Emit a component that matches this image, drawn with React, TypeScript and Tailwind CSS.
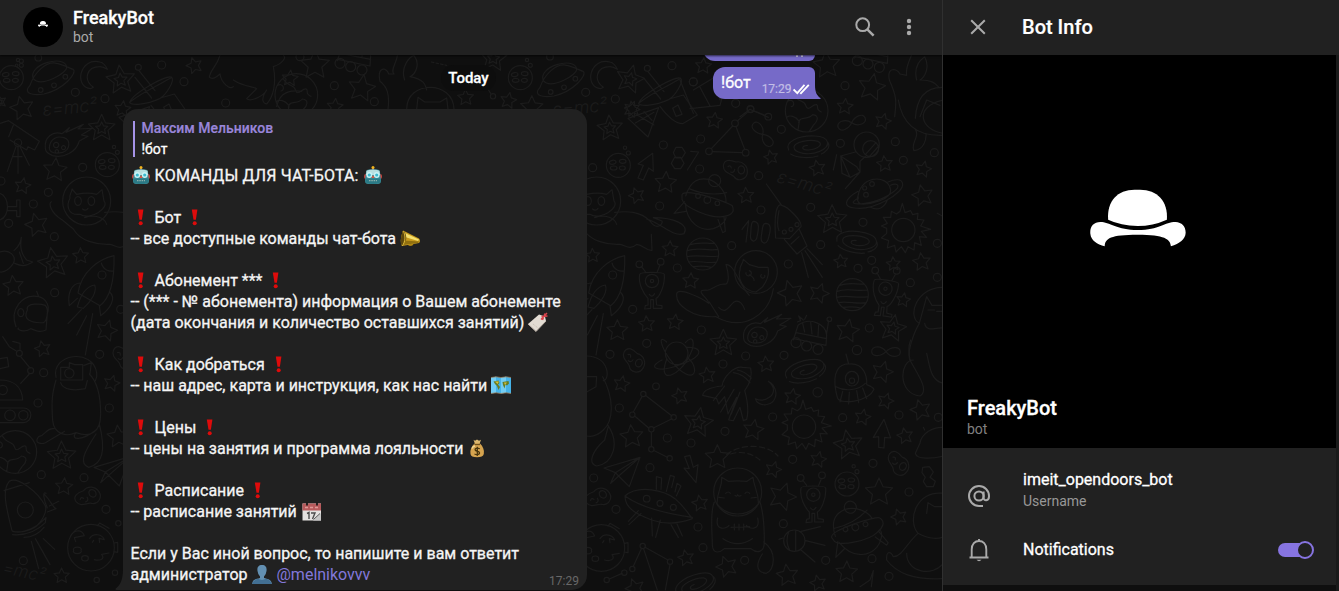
import type { ReactNode } from "react";

type Pt = [number, number, number?];
type Cluster = { ox: number; oy: number; stars: Pt[]; doubles: Pt[]; dots: Pt[] };

// Doodle positions are listed in thirds of a pixel, relative to each cluster's origin.
const clusters: Cluster[] = [
  {
    ox: 580, oy: 100,
    stars: [[157, 27, 24], [403, 62], [795, 20], [909, 64], [573, 172, 22], [712, 205], [914, 192], [1030, 208], [257, 248, 34], [170, 287], [498, 287], [1028, 287, 33], [270, 447], [38, 467, 22], [783, 484, 22], [940, 492, 22], [1025, 486, 28], [332, 543], [632, 580, 40], [717, 580, 31], [970, 600, 22], [112, 692, 33], [200, 672], [285, 667], [803, 693, 36]],
    doubles: [[90, 85, 40], [757, 360, 46], [430, 730, 42], [938, 685, 42]],
    dots: [[467, 10], [512, 28, 10], [565, 50, 10], [465, 70, 10], [387, 154, 10], [497, 158, 10], [362, 117], [250, 135], [604, 88], [781, 130], [946, 125], [1063, 158], [970, 181], [38, 203], [359, 207], [536, 227], [239, 318], [543, 330], [692, 322], [849, 367], [455, 437], [722, 434], [1072, 430], [292, 504], [625, 492], [875, 481], [834, 505], [991, 548], [1072, 532], [158, 628], [364, 690], [868, 684], [200, 730], [90, 763], [497, 768], [831, 750, 14], [612, 766]],
  },
  {
    ox: 580, oy: 340,
    stars: [[125, 132], [300, 168], [382, 106], [558, 73], [637, 170], [907, 96, 33], [917, 183], [1022, 210, 32], [848, 232], [520, 270, 32], [155, 290, 36], [975, 288], [412, 352, 38], [715, 359], [580, 389], [607, 470, 43], [897, 457, 43], [360, 490], [957, 531], [318, 654], [440, 680, 33], [622, 706, 34], [800, 697, 34], [714, 730], [165, 745, 30]],
    doubles: [[355, 248, 46], [805, 315, 46]],
    dots: [[228, 139, 10], [118, 204], [429, 72], [713, 157, 14], [578, 231], [262, 294], [333, 309], [435, 274], [788, 233], [957, 225], [1075, 232], [638, 358], [879, 370], [210, 383], [41, 414], [108, 508], [354, 561], [610, 551], [987, 456], [369, 623], [494, 661], [737, 661], [876, 656], [927, 709], [190, 162, 8], [157, 224, 8], [214, 268, 8], [281, 232, 8], [214, 328, 8], [269, 355, 8], [80, 720, 8], [133, 698, 8], [157, 687, 8], [188, 618, 8], [270, 665, 8]],
  },
  {
    ox: 0, oy: 180,
    stars: [[68, 18], [110, 135, 36], [242, 228], [40, 318, 32], [320, 452, 33], [128, 507], [335, 610], [192, 920, 27], [185, 1188, 24], [355, 770, 35]],
    doubles: [[160, 250, 48], [185, 828, 45]],
    dots: [[145, 37], [100, 72], [163, 170], [164, 338], [131, 578], [299, 523], [114, 669], [328, 684], [124, 884], [252, 893], [318, 988], [70, 1142], [290, 1200, 8], [345, 1178, 8], [355, 1030, 8], [26, 130], [362, 388]],
  },
  {
    ox: 0, oy: 0,
    stars: [[583, 197], [870, 235], [66, 325, 37], [368, 327], [165, 510, 37]],
    doubles: [[362, 240, 45], [305, 385, 42], [0, 305, 20]],
    dots: [[485, 195], [552, 245], [226, 277], [315, 296], [677, 309], [248, 502], [3, 543], [115, 173, 10], [64, 183, 6], [50, 196, 4]],
  },
  {
    ox: 260, oy: 50,
    stars: [[165, 45, 45], [305, 115, 42], [617, 143], [745, 152], [815, 172, 35], [1115, 178], [225, 170]],
    doubles: [[700, 25, 42], [1110, 88, 44]],
    dots: [[223, 107], [343, 155], [977, 127], [1066, 147], [1236, 47], [1300, 96], [699, 139, 8], [120, 20], [870, 20, 10]],
  },
  {
    ox: 680, oy: 0,
    stars: [[70, 198], [575, 262, 42], [440, 195, 42]],
    doubles: [],
    dots: [[40, 245], [495, 257]],
  },
];

function starPath(x: number, y: number, r: number) {
  const turn = ((x * 7 + y * 13) % 40) - 20;
  let d = "";
  for (let i = 0; i < 10; i++) {
    const a = ((i * 36 - 90 + turn) * Math.PI) / 180;
    const q = i % 2 ? r * 0.48 : r;
    d += `${i ? "L" : "M"}${(x + q * Math.cos(a)).toFixed(1)} ${(y + q * Math.sin(a)).toFixed(1)}`;
  }
  return d + "Z";
}

function At({ x, y, r = 0, s = 1, children }: { x: number; y: number; r?: number; s?: number; children: ReactNode }) {
  return <g transform={`translate(${x} ${y}) rotate(${r}) scale(${s})`}>{children}</g>;
}

const Galaxy = () => <path d="M-58 12C-70-12-30-32 20-30C65-28 72 0 35 16C5 30-42 22-42 4C-42-12 5-22 30-14C48-6 30 10 2 12C-22 12-20 0-2-2M-52 24C-30 38 10 36 30 30M60-10C70 5 50 20 40 24" />;
const Infinity = () => <path d="M0 0C-14-20-44-18-43 0C-42 18-14 14 0 0C14-14 42-18 43 0C44 18 14 20 0 0Z" />;
const Moonlet = () => (
  <><circle r="36" /><ellipse cx="-15" cy="-12" rx="10" ry="6" transform="rotate(-10)" /><ellipse cx="13" cy="-12" rx="10" ry="6" /><ellipse cx="-14" cy="8" rx="10" ry="6" /><ellipse cx="12" cy="8" rx="9" ry="6" /><circle cx="20" cy="-53" r="5" /><circle cx="30" cy="-37" r="6" /></>
);
const Bean = () => <path d="M-36-12C-34-34-14-30 2-24C22-28 38-12 36 8C34 30 6 36-4 20C-12 10-36 10-36-12ZM8-2A10 12 0 1 1 8 1M-22-10Q-14-16-12-6M-14 6Q-4 10-2-2" />;
const Banded = () => <path d="M-48 0A48 48 0 1 0 48 0A48 48 0 1 0-48 0ZM-38-28C-10-38 15-30 36-32M-46-10C-15-22 15-8 46-14M-47 8C-15 0 15 12 47 6M-42 24C-15 18 15 30 42 24M-28 38Q0 34 26 40" />;
const Alien = () => (
  <><path d="M-37-30C-36-38 36-38 37-30C40 5 20 40 12 42L14 62L30 64V72H4V46H-4V72L-22 74L-20 64L-12 62V42C-24 30-42 0-37-30ZM-20-38L-32-54M16-38L24-58M-8 30Q0 42 8 28" /><circle cy="-10" r="20" /><circle cy="-10" r="5" /><circle cx="-38" cy="-60" r="10" /><circle cx="26" cy="-68" r="10" /></>
);
const Sun = () => <path d="M-35 0A35 35 0 1 0 35 0A35 35 0 1 0-35 0ZM-50-5L-66-12L-48-20L-60-38L-38-38L-36-56L-20-48L-10-56L-3-80L5-52L22-58L28-46L44-50L42-32L62-30L52-12L82-2L54 4L70 22L48 20L54 46L34 38L32 60L14 50L6 68L-6 50L-22 66L-26 46L-48 54L-44 32L-66 24L-50 10Z" />;
const Saucer = () => (
  <><path d="M-62 32C-50-4-15-42 18-34C40-30 58-18 68 -16C80-5 40 44-20 58C-60 64-76 54-68 40ZM-52 12C-70-30 40-62 48-24C52-5-30 40-52 12Z" /><circle cx="-30" cy="46" r="7" /><circle cx="10" cy="32" r="7" /><circle cx="44" cy="6" r="7" /></>
);
const Ship = () => (
  <><path d="M-65-22C-50-70-25-78 5-72C35-62 58-30 56 -5M-76-26C-65-48 74 0 75 8C85 30 65 38 45 40C10 46-70 12-76-12ZM-66 0C-62 60-20 85 18 76C40 70 56 52 56 42M-68-5L-100 30L-64 24M32 48L46 88L54 84L50 40M-55-44Q0-20 58-32" /><circle cx="22" cy="-68" r="18" /><circle cx="-28" cy="-22" r="7" /><circle cx="0" cy="-10" r="10" /><circle cx="30" cy="0" r="7" /></>
);
const Ringed = () => (
  <><path d="M-50 20C-52-50 40-60 48-8C50 20-10 36-42 34C-60 24-50 10-48 4M-50-4C-92 20-96 44-60 46C0 54 88 0 84-26C82-44 58-40 40-32M-48 16C-80 32-60 36-30 32C20 26 72-8 70-20C68-28 56-26 48-22M-12 44C10 56 30 44 38 22" /><circle cx="-30" cy="-14" r="6" /><circle cx="-8" cy="-26" r="7" /><circle cx="-26" cy="6" r="7" /></>
);
const Rocket = () => (
  <><path d="M-10-56C-24-64-34-30-28 42L14 44L48 8C52-8 10-52-10-56ZM-10-56L-56-120M-2 46L36 90L66 66L42 14M18 60L42 38M50 86L70 160M60 80L112 160M66 74L112 122M-18-40C-22-20-24 8-18 20" /><circle cx="-2" cy="24" r="6" /><circle cx="18" cy="16" r="6" /><circle cx="36" cy="2" r="6" /></>
);
const Cruiser = () => (
  <><path d="M74-108C30-98-24-62-34 4L32 42C60 20 76-30 74-108ZM36-86C42-64 60-60 72-62M-28-26C-56-24-66 10-60 42L-36 20M60 0C82 18 64 50 34 72L30 42M-36 46C-26 8-8-16 16-20C24 0 6 28-18 50ZM-8 72L-38 130M10 66L-12 190M-24 54L-64 96" /><circle cx="38" cy="-50" r="12" /></>
);
const Antenna = () => (
  <><path d="M-66 36C-60 10 46-50 60-40C70-30 44 12 24 24C-20 44-60 44-66 36ZM-66 36C-40 10 30-20 60-40M-50-40L0 22M-38-60L10 0M26 22L68 10L110 70L66 96C40 96 10 60-2 44M36 50L52 40L64 68L46 74ZM-98 80L-6 48L-38 136ZM-70 70L-20 100M-50 60L-26 86M-76 94L-20 62" /><circle cx="-40" cy="-70" r="9" /></>
);
const Comet = () => <path d="M-62 20C-66-12-40-34-12-24L10-42L0-28L52-52L36-38L80-40L46-20L66-16L40-2C30 34-10 50-40 42C-56 36-62 30-62 20ZM-50 18C-48-10-26-18-6-12C16-4 12 24-10 32C-34 38-50 32-50 18ZM-30 2A8 8 0 1 0-29 2M-8 12A6 6 0 1 0-7 12M-28 24A5 5 0 1 0-27 24" />;
const Rover = () => (
  <><path d="M-48 20L-34-24C0-50 50-30 52 6L50 36L-46 16ZM-40-2L52 16M-20-30L-14-4M4-34L8 2M28-26L26 8M52 0L58-38M-18-40L-32-52L-26-38L-36-34M-14-42L-8-54" /><circle cx="60" cy="-42" r="7" /><circle cx="-40" cy="28" r="15" /><circle cx="-8" cy="38" r="15" /><circle cx="26" cy="48" r="15" /></>
);
const Earth = () => <path d="M-64 0A64 64 0 1 0 64 0A64 64 0 1 0-64 0ZM-58-28C-40-40-32-14-46-12M-40-50C-24-20-8-36-2-14C4 6 18-22 30-18C38-12 24-4 44 4M-24 36C-20 14 4 30 18 12C40 14 32 34 20 44L8 62M-60 20C-50 12-34 16-22 32L-26 58" />;
const Arrow = () => <path d="M20-40L22 14L8 4L-8 40L-24 34L-8-4L-24-8Z" />;
const Atom = () => <path d="M-34 0A34 34 0 1 0 34 0A34 34 0 1 0-34 0ZM-44 20C-94 44-54 60 16 32C88 4 74-20 30-18M-30-34C-60-60-44-14-20 18C8 56 52 84 54 50C52 30 44 22 34 14M26-32C50-60 56-30 42 0C26 40-10 70-30 66C-44 58-36 34-30 18" />;
const LongCat = () => (
  <><circle r="72" /><path d="M-62 36C-60-14-46-10-48-44L-28-32C-10-34 10-34 28-32L46-44C48-14 64 0 62 36C30 76-30 76-62 36ZM-70 30C-84 60-76 120-76 160C-74 190-50 180-40 170H40C60 186 80 180 80 150C80 100 78 60 66 28M78 150C120 180 110 232 86 244C50 240 58 210 74 186M-60 78C-70 120-30 110-26 100M60 78C70 120 30 110 26 100M-20 106L36 104M-10 96V114M4 96V114M18 96V114M-36 4Q-28-4-22 4M22 4Q28-4 36 4M-8 10Q-2 16 0 8Q4 16 10 10M-56 16L-40 18M56 16L40 18M-44 140Q0 170 44 140" /></>
);
const FloatCat = () => (
  <><circle r="64" /><path d="M-48-6C-48-24-40-22-38-38L-20-22L8-14L36-14C42 10 30 30 20 44L0 60C-40 56-56 20-48-6ZM-20 8Q-4 18-6 26M-30 2A8 8 0 1 0-20-4M16 8A6 6 0 1 0 26 10M-90-22C-66-26-50 40-20 70M-90-22C-80 10-80 40-96 36C-120 36-140 60-150 54C-188 54-140 80-142 94M-142 94C-160 80-240 40-238 68C-240 100-190 138-120 134C-40 180 40 130 52 50M-112 134L-140 90M-112 106C-90 130-80 100-66 90C-50 80-38 100-34 112" /></>
);
const FlyCat = () => (
  <><circle cx="0" r="72" /><path d="M-50-8C-54-20-44-24-44-36L-30-20C-10-24 14-24 30-20L46-34L52 0C70 20 10 60-20 40C-60 44-60 10-50-8ZM-36 0A10 13 0 1 0-16 0A10 13 0 1 0-36 0M4 0A10 13 0 1 0 24 0A10 13 0 1 0 4 0M-12 24Q-4 32 4 22M54 34C90 30 130 30 160 60C180 90 200 70 196 60L170 50C230 50 280 70 262 98C230 110 200 70 150 54M164 100L166 148C150 150 140 132 120 130C100 150 80 130 70 130C30 132-20 120-40 84L-74 56C-110 34-114 6-106 2M-6 50C10 44 50 40 60 70" /></>
);
const Helmet = () => <path d="M-48 40C-68-10-30-60 20-50C44-44 54-20 46 0L42 50C20 60 10 50-4 46C-20 60-50 48-40 44M-14-10C-20-34 30-28 40-24C52-10 44 24 34 28C0 30-30 20-14-10ZM20-50L14-66M-34-14A9 12 0 1 0-33-14" />;
const PhotoCat = () => <path d="M-60 10C-76-60 50-80 62-4C64 10 60 16 58 20M-46-20H-20V-34L-4-28H20V18H-46ZM-34-2A14 14 0 1 0-6-2A14 14 0 1 0-34-2M24-26L46-34L42 0M-60 18C-72 60-74 80-70 140C-66 180-30 190 0 176C40 190 74 180 74 120C74 60 60 20 40 0M-66 164C-90 160-90 184-112 188C-130 210-100 210-92 206L-34 172M0 176C-20 200 20 200 60 168M70 150C90 230 80 270 38 280C10 270 20 240 60 180M-46 26C-40 50 0 50 28 44L34 20" />;
const Pod = () => <path d="M-44-88C-22-104 40-60 64 -14C72 10 44 40 38 46C20 60-20 70-36 60C-48 10-70-60-44-88ZM-20-2A24 24 0 1 0 28-2A24 24 0 1 0-20-2M-60-60L16-84M-34 62C0 70 40 50 66 20L64 36C30 70-10 74-34 72M0 80C20 80 44 70 60 50M22 92L44 174M34 84L78 162M58 84L92 116M76-14L104-28M62-48C80-30 86-10 96-6L70 4M66-52C54-60 60-30 70-8" />;
const Plane = () => <path d="M-108 32L0 0L-32 88L-64 56L-88 78L-74 46L-108 32M0 0L-74 46L-64 56M0 0L-64 56" />;
const Beetle = () => (
  <><path d="M-100-24C-60-60 20-40 50-16C80 10 90 30 102 44C60 60 20 62-20 48C-60 32-100 16-100-24ZM-100-24C-40 20 60 34 102 40M-60 20L-90 52M-52 28L-88 62M-20 42L-18 96M6 48L-8 100M38 62L60 100M56 60L72 96M-6-44V-82L10-78L8-44M24-38L36-86L48-82L40-50M50-36L56-62L68-54L54-24" /><circle cx="-35" cy="-16" r="10" /><circle cx="5" cy="-2" r="9" /><circle cx="45" cy="10" r="9" /></>
);
const Shuttle = () => <path d="M38-80C10-84-20-50-24-24C-60-20-80-10-82 4L-40 14L-34 30L-16 8L-6 60L20 10L-4 78L10 80L30 40L40 80L50 76C60 40 44-10 44-10C66-40 66-60 62-78ZM10-64Q40-60 60-34M22-72Q44-68 64-48M-16-24L-50 20M12-14L-28 54M30-6L4 60" />;
const DomeAlien = () => <path d="M-48 30C-60-30-40-56-6-54C34-56 46-20 44 8C54 12 64 16 66 22C50 60-40 70-44 46ZM-48 14C-20 30 20 24 40 4M-10-54L-18-84M-20-10A20 22 0 1 0 20-10A20 22 0 1 0-20-10M-8-4A8 8 0 1 0 8-4A8 8 0 1 0-8-4M-28 28L-36 60M-8 30L-10 66M14 26L20 62M32 18L44 50" />;
const Satellite = () => <path d="M-32 0A32 32 0 1 0 32 0A32 32 0 1 0-32 0ZM-16-28C-24-10-24 10-14 28M4-32V32M20-28L78-42M34 0L92 14M20 28L62 64M-46-4L-34-8" />;
const Face = () => <path d="M-70 0A70 70 0 1 0 70 0A70 70 0 1 0-70 0ZM-62-34C-54-50-30-60-20-36L-50-30L-46-18M-4-28C8-46 34-40 40-24L24-28L26-16M8-22L4-16M-52 8A12 7 0 1 0-30 8A12 7 0 1 0-52 8M-28 32A10 8 0 1 0-8 32A10 8 0 1 0-28 32M10 36C24 40 44 36 32 20L54 16M70-14L80-16V14L68 12M20-66L26-74L54-58" />;
const Probe = () => <path d="M-38 0A38 38 0 1 0 38 0A38 38 0 1 0-38 0ZM-12 12A24 24 0 1 0 36 12A24 24 0 1 0-12 12M-4 30L28-6M10 34L36 4M-34 22L-78 34L-74 86L-48 98L-20 82L-20 50L-4 36M-78 34L-30 66L-20 82M-78 34L-50 98M-20 82L-64 132M-90 30L-100 76" />;

function Doodles() {
  return (
    <svg className="absolute inset-0 h-full w-full" viewBox="0 0 942 591" preserveAspectRatio="xMinYMin slice" fill="none" stroke="#1c1c1c" aria-hidden="true">
      {clusters.map((c) => (
        <g key={`${c.ox}-${c.oy}`} transform={`translate(${c.ox} ${c.oy}) scale(.33333)`} strokeWidth="3.6" strokeLinejoin="round">
          {c.stars.map(([x, y, r = 25]) => <path key={`s${x}-${y}`} d={starPath(x, y, r)} />)}
          {c.doubles.map(([x, y, r = 42]) => <path key={`d${x}-${y}`} d={starPath(x, y, r) + starPath(x, y, r * 0.46)} />)}
          {c.dots.map(([x, y, r = 12]) => <circle key={`c${x}-${y}`} cx={x} cy={y} r={r} />)}
        </g>
      ))}
      <g transform="translate(580 100) scale(.33333)" strokeWidth="3.6" strokeLinejoin="round" strokeLinecap="round">
        <path d="M520 32L556 46M505 35L472 63M458 78L394 146M397 155L487 158M468 80L494 148" />
        <At x={548} y={103} r={50}><Infinity /></At>
        <At x={815} y={68} r={-20}><Infinity /></At>
        <At x={918} y={755}><Infinity /></At>
        <At x={680} y={32}><Earth /></At>
        <At x={684} y={138}><Galaxy /></At>
        <At x={830} y={424} r={12}><Galaxy /></At>
        <At x={115} y={196}><Moonlet /></At>
        <At x={198} y={200}><Arrow /></At>
        <path d="M288 142L306 142L316 158L306 174H288L280 158ZM284 172H302L312 190L302 206H284L274 190ZM332 154L356 156L322 210" />
        <At x={466} y={210}><Bean /></At>
        <At x={382} y={310}><Ship /></At>
        <At x={860} y={134}><Probe /></At>
        <At x={884} y={278}><Ringed /></At>
        <At x={970} y={390}><Sun /></At>
        <At x={615} y={372}><Rocket /></At>
        <path d="M486 388L506 362L498 426M520 364C540 364 536 386 532 406C528 434 508 424 512 402C514 380 512 366 520 364ZM556 370C576 370 572 392 566 412C560 440 540 430 544 408C548 386 546 372 556 370Z" />
        <At x={368} y={462}><Banded /></At>
        <At x={817} y={584}><Banded /></At>
        <At x={216} y={553}><Alien /></At>
        <At x={915} y={576} r={8}><Alien /></At>
        <At x={528} y={516}><FloatCat /></At>
        <At x={553} y={695}><Comet /></At>
        <At x={688} y={700}><Rover /></At>
        <At x={50} y={303}><FlyCat /></At>
        <At x={60} y={575}><Cruiser /></At>
        <At x={290} y={760}><Atom /></At>
        <path d="M955 0C965 60 1000 110 1090 106M1090 0C1000 20 1020 90 1090 100M1005 86C1022 110 990 130 1002 152C1030 150 1040 120 1038 100M1090 562C1010 560 980 650 1018 670C1000 700 980 760 990 780M1018 670L1040 590L1056 616H1090M1044 630H1064M1070 634H1088M1034 670C1040 700 1070 680 1090 684M1072 340L1090 350" />
      </g>
      <g transform="translate(580 340) scale(.33333)" strokeWidth="3.6" strokeLinejoin="round" strokeLinecap="round">
        <path d="M186 170L160 216M164 228L206 264M220 264L276 236M196 166L276 228M214 277V319M220 331L262 352M88 717L126 700M160 679L184 626M195 622L264 660M270 674L256 750M191 627L232 750" />
        <At x={160} y={62} r={25}><Bean /></At>
        <At x={953} y={371} r={30}><Bean /></At>
        <At x={55} y={475} r={-40}><Bean /></At>
        <At x={450} y={162}><Shuttle /></At>
        <path d="M565 124C585 140 585 160 568 172C552 184 538 182 526 176C530 200 586 206 588 160C586 142 578 130 565 124Z" />
        <At x={675} y={92} r={-10}><Galaxy /></At>
        <At x={345} y={735} r={-15}><Galaxy /></At>
        <At x={816} y={126}><DomeAlien /></At>
        <At x={672} y={260}><Sun /></At>
        <path d="M912 238L932 294L914 292L912 324L896 322V290L880 292ZM330 346L314 350L328 386L312 384L348 428L354 374L340 382Z" />
        <path d="M440 344C480 310 560 310 594 348M452 342C490 330 520 344 540 360" strokeDasharray="16 10" />
        <At x={473} y={456}><LongCat /></At>
        <At x={180} y={352}><Plane /></At>
        <At x={235} y={492}><Beetle /></At>
        <At x={700} y={474}><Alien /></At>
        <At x={801} y={432}><Moonlet /></At>
        <At x={832} y={570} r={-35}><Ship /></At>
        <At x={643} y={602}><Satellite /></At>
        <At x={64} y={624}><Face /></At>
        <path d="M20 48C90 50 90 120 70 122M20 110H50L48 140L20 156M68 110C100 170 104 240 70 270C50 290 30 290 20 288M84 256C120 310 100 370 50 378C20 370 40 330 74 300L84 262M1000 60C960 60 950 160 1020 168C1050 150 1010 100 990 60C986 40 984 20 992 0M1090 130C1050 120 1050 80 1040 40M1028 382L1048 380L1060 396L1050 412L1066 424L1060 440H1040L1030 424L1036 412L1026 398ZM1090 460C1010 450 980 540 1014 580C1050 600 1080 596 1090 590M1014 580C980 610 966 650 940 650C930 630 918 636 920 660C950 700 1000 720 1090 716M980 640C980 700 1060 710 1090 670M1040 520L1044 488L1064 500L1090 500M840 740L870 720L880 692L874 740M1006 340L1020 310C1024 280 1060 260 1090 262M1006 340C1010 360 1060 356 1090 348M1034 270L1030 262" />
      </g>
      <g transform="translate(0 180) scale(.33333)" strokeWidth="3.6" strokeLinejoin="round" strokeLinecap="round">
        <At x={260} y={63}><FlyCat /></At>
        <At x={268} y={335}><Cruiser /></At>
        <At x={96} y={400}><Helmet /></At>
        <At x={228} y={582}><PhotoCat /></At>
        <At x={46} y={816}><Earth /></At>
        <At x={72} y={992}><Pod /></At>
        <At x={390} y={830}><Plane /></At>
        <At x={264} y={952} r={-40}><Bean /></At>
        <At x={273} y={1103}><Face /></At>
        <At x={370} y={535} r={20}><Bean /></At>
        <path d="M0 40C30 50 30 110 0 120M24 80H50V60H60V110H50V92H24M0 216C30 206 50 230 40 250C20 280 0 276 0 276M42 212C56 200 62 190 64 172C60 200 62 220 80 240L98 246C80 256 70 262 44 250M58 216L70 250M8 470L28 500L50 514M38 484L60 490V510M62 530L90 564M88 582L62 610M0 600C40 600 66 620 68 660H0M0 684H70C100 684 100 726 70 728H0M0 536L22 532L26 560L0 566" />
        <circle cx="58" cy="520" r="9" /><circle cx="92" cy="572" r="9" /><circle cx="30" cy="706" r="16" /><circle cx="70" cy="706" r="14" /><circle cx="8" cy="630" r="14" />
      </g>
      <g transform="scale(.33333)" strokeWidth="3.6" strokeLinejoin="round" strokeLinecap="round">
        <At x={34} y={233}><Moonlet /></At>
        <At x={322} y={494}><Moonlet /></At>
        <At x={152} y={224}><Saucer /></At>
        <At x={455} y={272}><Antenna /></At>
        <At x={198} y={425}><Comet /></At>
        <path d="M300 186C240 170 220 260 272 266L280 262C250 240 258 200 300 200C310 200 316 204 322 208C316 194 310 188 300 186ZM0 370L26 362L118 424L104 450L84 440L80 450L30 420M40 376L26 410M54 440V520M48 440L22 514M60 440L88 496M40 470H66M660 166C650 200 630 210 628 232C640 240 650 230 660 222C664 250 690 270 700 260M700 240C730 260 760 260 770 266L740 296C750 306 790 290 800 270C780 300 790 310 800 312C820 290 830 250 820 200C850 190 860 170 850 166M830 320C840 270 880 270 905 274" />
        <circle cx="54" cy="428" r="11" />
      </g>
      <g transform="translate(260 50) scale(.33333)" strokeWidth="3.6" strokeLinejoin="round" strokeLinecap="round">
        <At x={781} y={83}><Moonlet /></At>
        <At x={902} y={80}><Saucer /></At>
        <At x={1202} y={125}><Antenna /></At>
        <At x={280} y={12}><Rover /></At>
        <At x={109} y={135}><Earth /></At>
        <path d="M1050 36C990 20 970 110 1022 116L1030 112C1000 90 1008 50 1050 50C1060 50 1066 54 1072 58C1066 44 1060 38 1050 36ZM440 178C440 90 580 90 582 178M470 178L474 142L494 156H540L560 144L564 178M384 178C390 130 380 110 360 94C350 50 380 50 386 72H402C390 60 410 40 412 16M434 90C420 50 450 20 462 16C480 40 470 70 450 80C500 90 496 110 500 120M660 80L692 130" />
        <path d="M514 36L560 46" strokeDasharray="8 6" />
      </g>
      <g transform="translate(680 0) scale(.33333)" strokeWidth="3.6" strokeLinejoin="round" strokeLinecap="round">
        <At x={572} y={154}><Rover /></At>
        <path d="M644 350C650 300 650 290 628 240C620 200 650 204 660 222L680 226C676 200 690 180 694 166M710 240C700 200 720 180 734 170C750 200 736 230 720 240C770 240 770 260 780 264M706 355C710 290 740 262 786 262M720 350L740 300L780 316M0 240L40 340M40 270L150 204L120 316L30 326M60 262L90 318M100 240L120 300M180 350L210 328L265 352" />
        <circle cx="211" cy="327" r="10" />
      </g>
      <g fill="#1c1c1c" stroke="none" fontFamily="Inter, 'Open Sans', sans-serif" fontWeight="300" fontStyle="italic">
        <text x="43" y="116" fontSize="18" transform="rotate(-5 43 116)">ε=mc²</text>
        <text x="553" y="116" fontSize="18" transform="rotate(-5 553 116)">ε=mc²</text>
        <text x="776" y="182" fontSize="18" transform="rotate(16 776 182)">ε=mc²</text>
        <text x="2" y="573" fontSize="17" transform="rotate(12 2 573)">=mc²</text>
      </g>
    </svg>
  );
}

function Emoji({ children, className = "" }: { children: ReactNode; className?: string }) {
  return <svg viewBox="0 0 20 20" className={`h-5 w-5 shrink-0 ${className}`} aria-hidden="true">{children}</svg>;
}
const Robot = () => (
  <Emoji>
    <path d="M10 2V5" stroke="#7a5a9a" strokeWidth="1.6" /><circle cx="10" cy="1.6" r="1.5" fill="#f2b51d" />
    <rect x="1" y="8" width="18" height="5" rx="2" fill="#c8413b" />
    <path d="M3 6Q3 3.500 6 3.500H14Q17 3.500 17 6L18 14.500Q18 18 14.500 18H5.500Q2 18 2 14.500Z" fill="#3b8f9a" />
    <path d="M3.500 4.700Q10 2.500 16.500 4.700L17 9H3Z" fill="#b7dfe0" />
    <path d="M2.500 12.500H17.500V16.500Q10 19.500 2.500 16.500Z" fill="#2b7a86" />
    <circle cx="6.300" cy="9" r="2.900" fill="#c9f3f5" /><circle cx="13.700" cy="9" r="2.900" fill="#c9f3f5" />
    <circle cx="6.300" cy="9" r="1.600" fill="#3dbad0" /><circle cx="13.700" cy="9" r="1.600" fill="#3dbad0" />
    <path d="M10 9L11.500 12H8.500Z" fill="#e2543f" /><path d="M6 14.700H14" stroke="#8fb0ac" strokeWidth="1.200" strokeDasharray="1.500 .8" />
  </Emoji>
);
const Bang = () => <Emoji><path d="M6.800 1.500H12.400L10.900 11.700H8.500Z" fill="#de0b0b" /><circle cx="9.700" cy="15.200" r="2" fill="#de0b0b" /></Emoji>;
const Horn = () => (
  <Emoji>
    <path d="M7 13Q9 18 13 15" fill="none" stroke="#a9810f" strokeWidth="1.600" />
    <path d="M3 1.500L19 9.500Q21 12 19 14L2 17Q-1 12 3 1.500Z" fill="#c79a1c" /><path d="M5 4L19 10.500L18 12L5 8Z" fill="#f4df6e" />
    <path d="M3 1.500C7 4 8 13 2 17Q-1 12 3 1.500Z" fill="#5d470c" /><path d="M4 11.500L19 12.500L18 14L3 16Z" fill="#91700f" /><path d="M3 2C5.500 5 6 13 2 17" fill="none" stroke="#e7c23e" strokeWidth=".9" />
  </Emoji>
);
const Tag = () => (
  <Emoji className="overflow-visible">
    <path d="M11 1.500L17 3.500L18 8L8 18.500L0 11Z" fill="#e3dcd3" /><path d="M0 11L8 18.500L18 8" fill="none" stroke="#b5aaa0" />
    <path d="M13 6.500L19 0M13.500 3.500L19.500 3M14.500 7L17 .5" stroke="#d9434b" strokeWidth="1.500" /><path d="M5 11L10 15" stroke="#c8beb4" strokeDasharray="1 1" />
  </Emoji>
);
const WorldMap = () => (
  <Emoji>
    <path d="M0 1.500L5 .8L10 1.500L15 .8L20 1.500V17.500L15 16.800L10 17.500L5 16.800L0 17.500Z" fill="#46b3e8" /><path d="M0 1.500L5 .8V16.800L0 17.500ZM10 1.500L15 .8V16.800L10 17.500Z" fill="#72cdf4" />
    <path d="M2.500 5.500L7.500 4.500L8.500 7L7 8.500L9 11L7.500 14L6 10L4 8ZM11.500 6L17.500 5L18 7.500L16 9.500L14.500 8.500L13.500 12.500L12 9Z" fill="#667c24" /><path d="M4 5.500H8L6.500 8ZM13 6.500H16L14 9Z" fill="#d2bf3c" />
    <path d="M0 1.500L5 .8L10 1.500L15 .8L20 1.500M0 17.500L5 16.800L10 17.500L15 16.800L20 17.500" stroke="#9a7b58" fill="none" strokeWidth=".8" />
  </Emoji>
);
const MoneyBag = () => (
  <Emoji>
    <path d="M6.500 .8L8 1.800L10 .6L12 1.800L14 .8L12.500 5H8Z" fill="#dcb76d" /><path d="M7.500 4.500H13C16 7.500 17.500 11 16.800 15Q16 18.300 10 18.300Q4 18.300 3.500 15C2.800 11 4.500 7.500 7.500 4.500Z" fill="#d6a44f" />
    <path d="M7.500 5.500H13" stroke="#71521d" strokeWidth="1.300" /><path d="M5 9.500Q6 7 8 7" stroke="#f2d796" strokeWidth="1.500" fill="none" />
    <path d="M12.800 9.800Q10 8.300 8.200 10Q7.800 11.900 10.300 12.300Q13 12.700 12.400 14.700Q10.500 16.300 7.500 15M10.300 7.700V17" stroke="#49350d" strokeWidth="1.300" fill="none" />
  </Emoji>
);
const Calendar = () => (
  <Emoji className="translate-x-[1px]">
    <rect x=".5" y="1.500" width="18.500" height="17" fill="#e4e2e0" /><rect x=".5" y="1.500" width="18.500" height="7" fill="#b75a5c" />
    <path d="M3 5.500H6M8 5.500H11M13 5.500H16" stroke="#df9a98" strokeWidth="1.500" /><path d="M5 0V3.500M15 0V3.500" stroke="#1a1a1a" strokeWidth="1.800" />
    <path d="M5 11.500L7 10.500V17M9 11H13L10.500 17" stroke="#4c4c4c" strokeWidth="1.400" fill="none" /><path d="M19 11L11 18.500H19Z" fill="#c7c7c7" /><path d="M18 11.500L11.500 17.500" stroke="#555" />
  </Emoji>
);
const Person = () => (
  <Emoji><path d="M10 0C14 0 15 3 14.500 6Q14 10 12 11.500V13C15 14 19.500 14 19.800 19H.2C.5 14 5 14 8 13V11.500Q6 10 5.500 6C5 3 6 0 10 0Z" fill="#6390b2" /><path d="M6 13.800Q10 16 14 13.800Q19 15 19.800 19H.2Q1 15 6 13.800Z" fill="#426f93" /></Emoji>
);

const Line = ({ children }: { children?: ReactNode }) => <div className="flex h-[21px] items-center whitespace-pre">{children}</div>;

const Hat = ({ className }: { className: string }) => (
  <svg viewBox="63 56 286 174" preserveAspectRatio="none" className={className} fill="#fff" aria-hidden="true">
    <path d="M117 148C113 92 145 58 196 58H212C263 58 296 92 292 148Q250 167 205 167Q155 166 117 148Z" />
    <path d="M94 155C73 155 62 170 64 190C66 210 84 222 107 228C108 204 124 193 205 193C286 193 302 206 304 228C330 219 347 207 348 187C348 168 336 156 318 155C285 155 270 179 205 179C145 179 120 155 94 155Z" />
  </svg>
);

export default function App() {
  return (
    <div className="flex h-[591px] w-[1339px] overflow-hidden bg-[#0f0f0f] font-[Roboto,sans-serif] text-white">
      <main className="relative flex w-[942px] shrink-0 flex-col overflow-hidden">
        <Doodles />
        <header className="relative z-10 flex h-[55px] shrink-0 items-center bg-[#212121] pr-[21px] pb-px pl-[23px] shadow-[0_1px_2px_#000a]">
          <div className="flex h-10 w-10 items-center justify-center rounded-full bg-black pb-[7px]">
            <Hat className="h-[6px] w-[10px]" />
          </div>
          <div className="ml-[10px] flex-1">
            <h1 className="h-[20px] text-[18px] leading-[20px] font-medium [-webkit-text-stroke:0.3px]">FreakyBot</h1>
            <p className="h-[18px] text-[14px] leading-[18px] text-[#aaaaaa]">bot</p>
          </div>
          <svg viewBox="0 0 24 24" className="mr-[20px] h-6 w-6" fill="none" stroke="#aaa" strokeWidth="2" aria-label="Search"><circle cx="9.700" cy="9.700" r="6.400" /><path d="M14.300 14.300L20.600 20.600" strokeWidth="2.500" /></svg>
          <svg viewBox="0 0 24 24" className="h-6 w-6" fill="#aaa" aria-label="More"><circle cx="12" cy="6" r="2.200" /><circle cx="12" cy="12" r="2.200" /><circle cx="12" cy="18" r="2.200" /></svg>
        </header>

        <div className="relative flex-1">
          <div className="absolute top-[10px] left-[441px] flex h-[26px] w-[55px] items-center justify-center rounded-full bg-[#0d0d0d] text-[15px] font-medium [-webkit-text-stroke:0.3px]">Today</div>
          <div className="absolute top-[-20px] left-[703px] h-[26px] w-[112px] rounded-[12px] rounded-br-[6px] bg-[#766ac8]">
            <span className="absolute right-[12px] bottom-[4px] h-[2px] w-[2px] bg-white/60" />
            <span className="absolute right-[17px] bottom-[4px] h-[2px] w-[2px] bg-white/60" />
          </div>
          <div className="absolute top-[12px] left-[713px] flex h-8 w-[102px] items-center rounded-[12px] rounded-tr-[6px] rounded-br-none bg-[#766ac8] pl-2">
            <span className="-mt-px text-[16px] leading-[21px] [-webkit-text-stroke:0.3px]">!бот</span>
            <span className="mt-[11px] ml-[11px] text-[12px] leading-4 text-white/50 [-webkit-text-stroke:0.2px]">17:29</span>
            <svg viewBox="0 0 17 11" className="mt-[12px] ml-px h-[11px] w-[17px]" fill="none" stroke="#fff" strokeWidth="1.800" aria-label="Read"><path d="M.6 5.500L4.300 9.200L11.500 .8M7.300 8.500L8 9.200L15.800 .8" /></svg>
            <svg viewBox="0 0 7 14" className="absolute bottom-0 left-[101px] h-[14px] w-[7px]" fill="#766ac8" aria-hidden="true"><path d="M0 0H1C1 7 3 11 6.500 13Q7 14 6 14H0Z" /></svg>
          </div>
        </div>

        <article className="relative ml-[123px] flex h-[481px] w-[464px] shrink-0 flex-col rounded-[15px] rounded-bl-none bg-[#212121] px-[7.5px] pt-[12px]">
          <svg viewBox="0 0 9 20" className="absolute bottom-0 left-[-8px] h-5 w-[9px]" fill="#212121" aria-hidden="true"><path d="M9 0H8C8 9 5 16 .7 18.500Q0 20 1.500 20H9Z" /></svg>
          <div className="ml-[2.5px] h-9 border-l-2 border-[#a694e8] pl-[6.500px]">
            <div className="h-[18px] text-[14px] leading-[15px] font-medium text-[#9a86da] [-webkit-text-stroke:0.2px]">Максим Мельников</div>
            <div className="h-[18px] text-[14px] leading-[20px] [-webkit-text-stroke:0.3px]">!бот</div>
          </div>
          <div className="mt-[8px] text-[16px] leading-[21px] text-[#f5f5f5] [-webkit-text-stroke:0.3px]">
            <Line><Robot /><span className="tracking-[0.12px]"> КОМАНДЫ ДЛЯ ЧАТ-БОТА: </span><Robot /></Line>
            <Line />
            <Line><Bang /> Бот <Bang /></Line>
            <Line>-- все доступные команды чат-бота <Horn /></Line>
            <Line />
            <Line><Bang /> Абонемент *** <Bang /></Line>
            <Line>-- (*** - № абонемента) информация о Вашем абонементе</Line>
            <Line>(дата окончания и количество оставшихся занятий) <Tag /></Line>
            <Line />
            <Line><Bang /> Как добраться <Bang /></Line>
            <Line>-- наш адрес, карта и инструкция, как нас найти <WorldMap /></Line>
            <Line />
            <Line><Bang /> Цены <Bang /></Line>
            <Line>-- цены на занятия и программа лояльности <MoneyBag /></Line>
            <Line />
            <Line><Bang /> Расписание <Bang /></Line>
            <Line>-- расписание занятий <Calendar /></Line>
            <Line />
            <Line>Если у Вас иной вопрос, то напишите и вам ответит</Line>
            <Line>администратор <Person /><span className="ml-[5px] text-[#8378db] [-webkit-text-stroke:0]">@melnikovvv</span></Line>
          </div>
          <time className="absolute right-[8px] bottom-[1px] text-[12px] leading-4 text-[#686868]">17:29</time>
        </article>
        <div className="h-px shrink-0" />
      </main>

      <aside className="flex w-[397px] shrink-0 flex-col border-l border-[#303030]">
        <header className="flex h-[55px] shrink-0 items-center bg-[#212121] pb-px pl-[23px]">
          <svg viewBox="0 0 24 24" className="h-6 w-6" stroke="#aaa" strokeWidth="2" aria-label="Close"><path d="M5.200 5.200L18.800 18.800M18.800 5.200L5.200 18.800" /></svg>
          <h2 className="ml-8 text-[20px] leading-6 font-medium [-webkit-text-stroke:0.2px]">Bot Info</h2>
        </header>
        <div className="flex flex-1">
          <div className="flex w-[393px] flex-col">
            <section className="flex h-[393px] flex-col items-center bg-black">
              <Hat className="mt-[134px] mr-[3px] h-[58px] w-[96px]" />
              <div className="mt-auto w-full pb-[10px] pl-6">
                <h3 className="text-[20px] leading-6 font-medium [-webkit-text-stroke:0.3px]">FreakyBot</h3>
                <p className="text-[14px] leading-[18px] text-[#808080]">bot</p>
              </div>
            </section>
            <section className="flex h-[137px] flex-col bg-[#212121] pt-[21px]">
              <div className="flex h-[54px] items-center pl-6">
                <svg viewBox="0 0 24 24" className="h-6 w-6 shrink-0" fill="none" stroke="#aaa" strokeWidth="2" aria-hidden="true"><circle cx="12" cy="12" r="4.600" /><path d="M16.600 7.500V13.800C16.600 17.300 22 17.300 22 12.500V12A10 10 0 1 0 12 22H16" /></svg>
                <div className="ml-8 pb-[11px]">
                  <div className="h-[22px] text-[16px] leading-[22px] [-webkit-text-stroke:0.3px]">imeit_opendoors_bot</div>
                  <div className="text-[14px] leading-[21px] text-[#989898]">Username</div>
                </div>
              </div>
              <div className="flex h-[54px] items-center pl-6">
                <svg viewBox="0 0 24 24" className="h-6 w-6 shrink-0" fill="none" stroke="#aaa" strokeWidth="1.900" aria-hidden="true"><path d="M2.500 19.500H21.500M4.700 19V11.500C4.700 6 8 3 12 3S19.300 6 19.300 11.500V19M12 1V3" /><path d="M9.500 21.800H14.500Q12 24.500 9.500 21.800Z" fill="#aaa" stroke="none" /></svg>
                <div className="ml-8 flex-1 text-[16px] leading-[22px] [-webkit-text-stroke:0.3px]">Notifications</div>
                <div className="mr-[22px] flex h-[18px] w-9 items-center">
                  <div className="flex h-[14px] w-[35px] items-center justify-end rounded-full bg-[#8774e1]">
                    <div className="-mr-px h-[18px] w-[18px] shrink-0 rounded-full border-2 border-[#8774e1] bg-[#212121]" />
                  </div>
                </div>
              </div>
            </section>
          </div>
          <div className="w-[3px] bg-[#1a1a1a]" />
        </div>
      </aside>
    </div>
  );
}
